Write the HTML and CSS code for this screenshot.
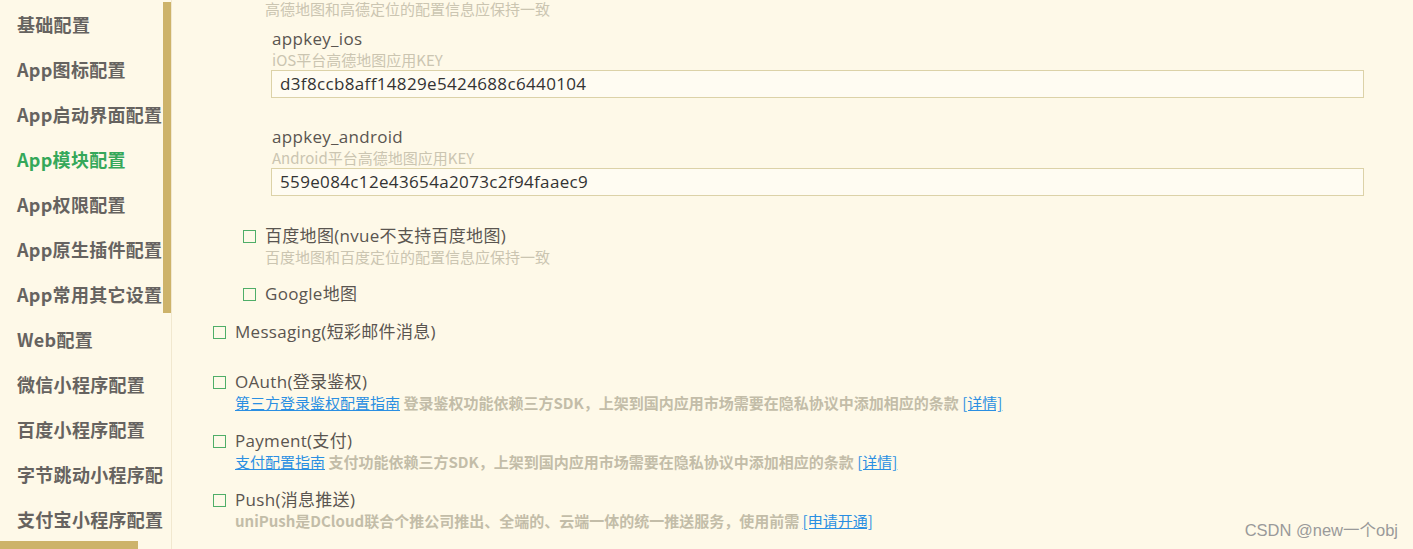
FILE: index.html
```html
<!DOCTYPE html>
<html lang="zh">
<head>
<meta charset="utf-8">
<title>App模块配置</title>
<link rel="stylesheet" href="styles.css">
</head>
<body>
<div class="page">
  <aside class="sidebar">
    <ul class="nav">
      <li>基础配置</li>
      <li>App图标配置</li>
      <li>App启动界面配置</li>
      <li class="active">App模块配置</li>
      <li>App权限配置</li>
      <li>App原生插件配置</li>
      <li>App常用其它设置</li>
      <li>Web配置</li>
      <li>微信小程序配置</li>
      <li>百度小程序配置</li>
      <li>字节跳动小程序配置</li>
      <li>支付宝小程序配置</li>
    </ul>
    <div class="vthumb"></div>
    <div class="hthumb"></div>
  </aside>
  <main class="main">
    <div class="lvl3">
      <div class="note top-note">高德地图和高德定位的配置信息应保持一致</div>
      <div class="field">
        <div class="field-label">appkey_ios</div>
        <div class="note">iOS平台高德地图应用KEY</div>
        <div class="input">d3f8ccb8aff14829e5424688c6440104</div>
      </div>
      <div class="field">
        <div class="field-label">appkey_android</div>
        <div class="note">Android平台高德地图应用KEY</div>
        <div class="input">559e084c12e43654a2073c2f94faaec9</div>
      </div>
    </div>

    <div class="opt lvl2 baidu">
      <div class="row"><span class="cb"></span><span class="label">百度地图(nvue不支持百度地图)</span></div>
      <div class="note sub">百度地图和百度定位的配置信息应保持一致</div>
    </div>
    <div class="opt lvl2 google">
      <div class="row"><span class="cb"></span><span class="label">Google地图</span></div>
    </div>

    <div class="opt lvl1 messaging">
      <div class="row"><span class="cb"></span><span class="label">Messaging(短彩邮件消息)</span></div>
    </div>
    <div class="opt lvl1 oauth">
      <div class="row"><span class="cb"></span><span class="label">OAuth(登录鉴权)</span></div>
      <div class="desc"><a class="link">第三方登录鉴权配置指南</a> 登录鉴权功能依赖三方SDK，上架到国内应用市场需要在隐私协议中添加相应的条款 <a class="link">[详情]</a></div>
    </div>
    <div class="opt lvl1 payment">
      <div class="row"><span class="cb"></span><span class="label">Payment(支付)</span></div>
      <div class="desc"><a class="link">支付配置指南</a> 支付功能依赖三方SDK，上架到国内应用市场需要在隐私协议中添加相应的条款 <a class="link">[详情]</a></div>
    </div>
    <div class="opt lvl1 push">
      <div class="row"><span class="cb"></span><span class="label">Push(消息推送)</span></div>
      <div class="desc">uniPush是DCloud联合个推公司推出、全端的、云端一体的统一推送服务，使用前需 <a class="link">[申请开通]</a></div>
    </div>
    <div class="watermark">CSDN @new一个obj</div>
  </main>
</div>
</body>
</html>
```

FILE: styles.css
```css
* { box-sizing: border-box; }
html, body { margin: 0; padding: 0; }
body {
  background: #fef9e8;
  font-family: "Open Sans", "Noto Sans CJK SC", sans-serif;
  color: #5a5550;
  width: 1413px;
  height: 549px;
  overflow: hidden;
}
.page {
  display: flex;
  height: 549px;
}
.sidebar {
  position: relative;
  width: 172px;
  flex: 0 0 172px;
  border-right: 1px solid #f1e8cf;
  overflow: hidden;
}
.nav {
  list-style: none;
  margin: 0;
  padding: 2px 0 0 17px;
  width: 163px;
  overflow: hidden;
  white-space: nowrap;
}
.nav li {
  height: 45px;
  line-height: 45px;
  font-family: "Noto Sans CJK SC", sans-serif;
  font-weight: bold;
  font-size: 18px;
  color: #666360;
  letter-spacing: 0.3px;
}
.nav li.active { color: #35a85a; }
.vthumb {
  position: absolute;
  left: 163px;
  top: 2px;
  width: 8px;
  height: 311px;
  background: #cdb36a;
}
.hthumb {
  position: absolute;
  left: 0;
  top: 541px;
  width: 138px;
  height: 8px;
  background: #cdb36a;
}
.main {
  position: relative;
  flex: 1;
  padding-left: 41px;
}
.note {
  font-family: "Noto Sans CJK SC", sans-serif;
  font-size: 15px;
  line-height: 20px;
  color: #cbc5b1;
}
.lvl3 {
  padding-left: 59px;
}
.top-note {
  line-height: 18px;
  margin-left: -7px;
}
.field { margin-top: 10px; }
.field + .field { margin-top: 28px; }
.field-label {
  font-size: 17px;
  line-height: 22px;
  letter-spacing: 0.3px;
  color: #5a5550;
}
.input {
  width: 1093px;
  height: 28px;
  margin-left: -1px;
  border: 1px solid #dcd2a8;
  background: #fffcf2;
  padding-left: 8px;
  font-size: 17px;
  line-height: 26px;
  letter-spacing: 0.35px;
  color: #333;
}
.lvl2 { padding-left: 30px; }
.row {
  display: flex;
  align-items: center;
  height: 22px;
}
.cb {
  width: 13px;
  height: 13px;
  border: 1px solid #4fae68;
  margin-right: 9px;
  flex: 0 0 13px;
}
.label {
  font-family: "Open Sans", "Noto Sans CJK SC", sans-serif;
  font-size: 17px;
  line-height: 22px;
  letter-spacing: 0.3px;
  color: #5a5550;
}
.sub { margin-left: 22px; }
.baidu { margin-top: 29px; }
.google { margin-top: 16px; }
.messaging { margin-top: 16px; }
.oauth { margin-top: 28px; }
.payment { margin-top: 17px; }
.push { margin-top: 17px; }
.desc {
  margin-left: 22px;
  font-family: "Noto Sans CJK SC", sans-serif;
  font-size: 15px;
  line-height: 20px;
  font-weight: bold;
  color: #c3bda8;
  white-space: nowrap;
}
.link {
  color: #2a8fe2;
  text-decoration: underline;
  font-weight: normal;
}
.watermark {
  position: absolute;
  right: 15px;
  top: 519px;
  font-family: "Liberation Sans", "Noto Sans CJK SC", sans-serif;
  font-size: 16.5px;
  line-height: 22px;
  color: #9a9a9a;
}
```
